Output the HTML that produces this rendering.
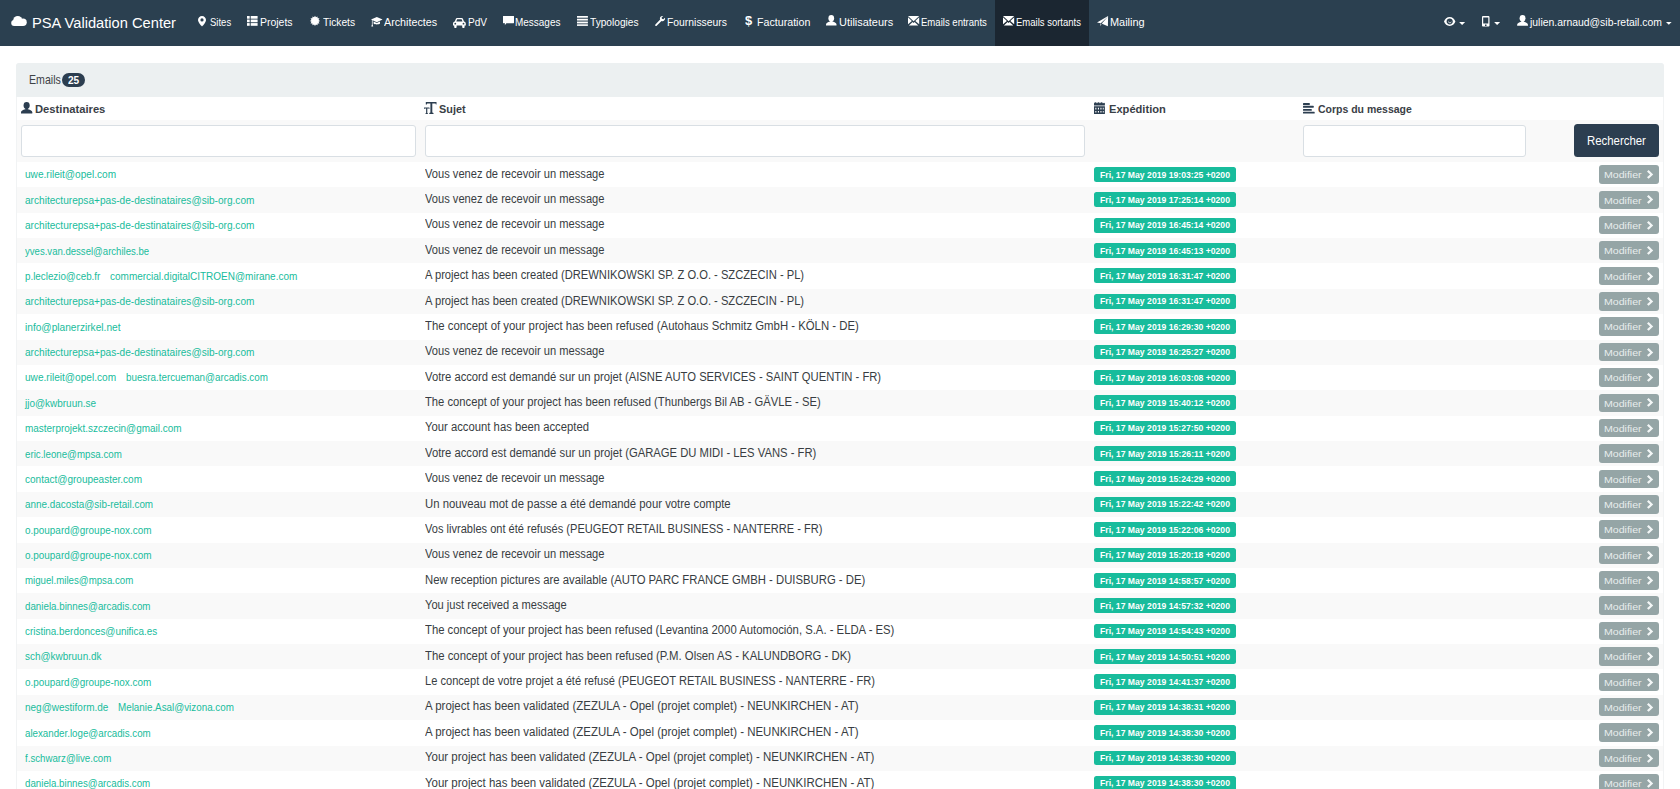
<!DOCTYPE html>
<html><head><meta charset="utf-8"><title>PSA Validation Center</title>
<style>
html,body{margin:0;padding:0;}
body{width:1680px;height:789px;overflow:hidden;position:relative;background:#fff;font-family:"Liberation Sans",sans-serif;}
.t{position:absolute;white-space:nowrap;line-height:1;transform-origin:0 0;}
.r{position:absolute;}
.i{position:absolute;overflow:visible;}
</style></head><body>
<div class="r" style="left:0.00px;top:0.00px;width:1680.00px;height:46.00px;background:#2b4050;"></div>
<div class="r" style="left:995.20px;top:0.00px;width:94.00px;height:46.00px;background:#1b2631;"></div>
<svg class="i" style="left:11.20px;top:16.10px;width:15.75px;height:10.00px" viewBox="0 0 15.75 10" fill="#ffffff"><circle cx="6.75" cy="4.6" r="4.6"/><circle cx="12" cy="6.2" r="3.75"/><circle cx="3.2" cy="7" r="3"/><rect x="3.2" y="6" width="8.8" height="4"/></svg>
<div class="t" style="left:31.50px;top:15px;font-size:15.2px;color:#ffffff;transform:scaleX(0.9654);">PSA Validation Center</div>
<div class="t" style="left:209.80px;top:17px;font-size:11.2px;color:#ffffff;transform:scaleX(0.8507);">Sites</div>
<div class="t" style="left:260.40px;top:17px;font-size:11.2px;color:#ffffff;transform:scaleX(0.9359);">Projets</div>
<div class="t" style="left:322.80px;top:17px;font-size:11.2px;color:#ffffff;transform:scaleX(0.9157);">Tickets</div>
<div class="t" style="left:384.30px;top:17px;font-size:11.2px;color:#ffffff;transform:scaleX(0.9588);">Architectes</div>
<div class="t" style="left:467.70px;top:17px;font-size:11.2px;color:#ffffff;transform:scaleX(0.9023);">PdV</div>
<div class="t" style="left:515.40px;top:17px;font-size:11.2px;color:#ffffff;transform:scaleX(0.8909);">Messages</div>
<div class="t" style="left:590.00px;top:17px;font-size:11.2px;color:#ffffff;transform:scaleX(0.9078);">Typologies</div>
<div class="t" style="left:667.00px;top:17px;font-size:11.2px;color:#ffffff;transform:scaleX(0.9268);">Fournisseurs</div>
<div class="t" style="left:756.50px;top:17px;font-size:11.2px;color:#ffffff;transform:scaleX(0.9526);">Facturation</div>
<div class="t" style="left:838.50px;top:17px;font-size:11.2px;color:#ffffff;transform:scaleX(0.9786);">Utilisateurs</div>
<div class="t" style="left:921.30px;top:17px;font-size:11.2px;color:#ffffff;transform:scaleX(0.8540);">Emails entrants</div>
<div class="t" style="left:1016.00px;top:17px;font-size:11.2px;color:#ffffff;transform:scaleX(0.8491);">Emails sortants</div>
<div class="t" style="left:1110.00px;top:17px;font-size:11.2px;color:#ffffff;transform:scaleX(0.9774);">Mailing</div>
<svg class="i" style="left:198.30px;top:15.75px;width:8.00px;height:10.50px" viewBox="0 0 8 10.5" fill="#ffffff"><path fill-rule="evenodd" d="M4 0C1.8 0 0 1.8 0 4C0 6.6 4 10.5 4 10.5C4 10.5 8 6.6 8 4C8 1.8 6.2 0 4 0ZM4 2.3A1.6 1.6 0 1 0 4 5.5A1.6 1.6 0 1 0 4 2.3Z"/></svg>
<svg class="i" style="left:247.30px;top:16.20px;width:10.60px;height:9.80px" viewBox="0 0 10.6 9.8" fill="#ffffff"><rect x="0" y="0" width="2.7" height="2.7"/><rect x="3.7" y="0" width="6.9" height="2.7"/><rect x="0" y="3.55" width="2.7" height="2.7"/><rect x="3.7" y="3.55" width="6.9" height="2.7"/><rect x="0" y="7.1" width="2.7" height="2.7"/><rect x="3.7" y="7.1" width="6.9" height="2.7"/></svg>
<svg class="i" style="left:309.60px;top:15.90px;width:10.00px;height:9.80px" viewBox="0 0 10 9.8" fill="#ffffff"><polygon points="10.10,4.90 8.57,5.86 9.42,7.45 7.62,7.52 7.55,9.32 5.96,8.47 5.00,10.00 4.04,8.47 2.45,9.32 2.38,7.52 0.58,7.45 1.43,5.86 -0.10,4.90 1.43,3.94 0.58,2.35 2.38,2.28 2.45,0.48 4.04,1.33 5.00,-0.20 5.96,1.33 7.55,0.48 7.62,2.28 9.42,2.35 8.57,3.94"/></svg>
<svg class="i" style="left:370.80px;top:16.60px;width:11.60px;height:9.60px" viewBox="0 0 11.6 9.6" fill="#ffffff"><path d="M5.8 0L11.6 2.6L5.8 5.2L0 2.6Z"/><path d="M2.6 4.4L5.8 5.9L9 4.4L9 6.6C8 7.8 3.6 7.8 2.6 6.6Z"/><path d="M0.9 2.8L1.6 2.8L1.6 7.6L2.2 9.6L0.3 9.6L0.9 7.6Z"/></svg>
<svg class="i" style="left:453.00px;top:17.50px;width:12.80px;height:10.00px" viewBox="0 0 12.8 10" fill="#ffffff"><path fill-rule="evenodd" d="M3 0.6C3.2 0.2 3.6 0 4 0H8.8C9.2 0 9.6 0.2 9.8 0.6L11 3.6C12 3.8 12.8 4.6 12.8 5.6V7.6H11.6V9.2C11.6 9.7 11.2 10 10.8 10H10C9.6 10 9.2 9.7 9.2 9.2V7.6H3.6V9.2C3.6 9.7 3.2 10 2.8 10H2C1.6 10 1.2 9.7 1.2 9.2V7.6H0V5.6C0 4.6 0.8 3.8 1.8 3.6ZM4.2 1.3L3.3 3.5H9.5L8.6 1.3ZM2.3 4.8A0.9 0.9 0 1 0 2.3 6.6A0.9 0.9 0 1 0 2.3 4.8ZM10.5 4.8A0.9 0.9 0 1 0 10.5 6.6A0.9 0.9 0 1 0 10.5 4.8Z"/></svg>
<svg class="i" style="left:502.80px;top:16.20px;width:11.00px;height:9.30px" viewBox="0 0 11 9.3" fill="#ffffff"><path d="M0.4 0H10.6C10.8 0 11 0.2 11 0.4V6.8C11 7 10.8 7.2 10.6 7.2H3.4L1.8 9.3L2 7.2H0.4C0.2 7.2 0 7 0 6.8V0.4C0 0.2 0.2 0 0.4 0Z"/></svg>
<svg class="i" style="left:576.60px;top:16.30px;width:10.90px;height:9.90px" viewBox="0 0 10.9 9.9" fill="#ffffff"><rect x="0" y="0" width="10.9" height="1.7"/><rect x="0" y="2.75" width="10.9" height="1.8"/><rect x="0" y="5.6" width="10.9" height="1.8"/><rect x="0" y="8.3" width="10.9" height="1.6"/></svg>
<svg class="i" style="left:654.60px;top:15.65px;width:10.40px;height:10.00px" viewBox="0 0 10.4 10" fill="#ffffff"><path d="M7.4 0C6 0 4.9 1.1 4.9 2.5C4.9 2.9 5 3.3 5.2 3.6L0.4 8.4C0 8.8 0 9.4 0.4 9.7C0.8 10.1 1.4 10.1 1.7 9.7L6.5 4.9C6.8 5.1 7.1 5.2 7.5 5.2C8.9 5.2 10.1 4 10.1 2.6C10.1 2.3 10 2 9.9 1.7L8.4 3.2L6.9 2.8L6.6 1.4L8.2 0.1C7.9 0 7.7 0 7.4 0Z"/></svg>
<div class="t" style="left:745.00px;top:15px;font-size:12.6px;color:#ffffff;font-weight:bold;transform:scaleX(1.0274);">$</div>
<svg class="i" style="left:825.80px;top:15.40px;width:10.50px;height:10.50px" viewBox="0 0 10.5 10.5" fill="#ffffff"><ellipse cx="5.25" cy="3.2" rx="2.85" ry="3.25"/><rect x="4.1" y="5" width="2.3" height="2.2"/><path d="M0 10.5V9.4C0 8 1.8 7.1 3.9 6.5H6.6C8.7 7.1 10.5 8 10.5 9.4V10.5Z"/></svg>
<svg class="i" style="left:908.00px;top:16.10px;width:11.20px;height:9.40px" viewBox="0 0 11.2 9.4" fill="#ffffff"><path d="M0 0H11.2L5.6 5.2Z"/><path d="M0 1.3L3.9 4.9L0 8.2Z"/><path d="M11.2 1.3L7.3 4.9L11.2 8.2Z"/><path d="M0.9 9.4L4.6 6L5.6 6.9L6.6 6L10.3 9.4Z"/></svg>
<svg class="i" style="left:1003.00px;top:16.10px;width:11.20px;height:9.40px" viewBox="0 0 11.2 9.4" fill="#ffffff"><path d="M0 0H11.2L5.6 5.2Z"/><path d="M0 1.3L3.9 4.9L0 8.2Z"/><path d="M11.2 1.3L7.3 4.9L11.2 8.2Z"/><path d="M0.9 9.4L4.6 6L5.6 6.9L6.6 6L10.3 9.4Z"/></svg>
<svg class="i" style="left:1096.90px;top:15.65px;width:11.10px;height:10.20px" viewBox="0 0 11.1 10.2" fill="#ffffff"><path d="M11.1 0L0 6.6L3.8 7.3L11.1 0.6L4.8 7.6L5.6 7.9L10.9 10.2Z"/><path d="M3.4 7.6L4.4 8.1L3.6 10.2Z"/></svg>
<svg class="i" style="left:1443.70px;top:16.60px;width:11.40px;height:8.90px" viewBox="0 0 11.4 8.9" fill="#ffffff"><path fill-rule="evenodd" d="M5.7 0C3 0 0.9 2 0 4.45C0.9 6.9 3 8.9 5.7 8.9C8.4 8.9 10.5 6.9 11.4 4.45C10.5 2 8.4 0 5.7 0ZM5.7 1.5C4 1.5 2.6 2.8 2.6 4.45C2.6 6.1 4 7.4 5.7 7.4C7.4 7.4 8.8 6.1 8.8 4.45C8.8 2.8 7.4 1.5 5.7 1.5Z"/><path d="M4 3.6C4 5.6 5 6.3 5.7 6.3C6.6 6.3 7.6 5.5 7.4 3.9C7 5 6.4 5.4 5.7 5.4C4.9 5.4 4.4 4.8 4 3.6Z"/></svg>
<svg class="i" style="left:1458.60px;top:21.90px;width:6.20px;height:3.00px" viewBox="0 0 6 3" fill="#ffffff"><path d="M0 0H6L3 3Z"/></svg>
<svg class="i" style="left:1482.00px;top:15.70px;width:7.50px;height:10.60px" viewBox="0 0 7.5 10.6" fill="#ffffff"><path fill-rule="evenodd" d="M1.2 0H6.3C7 0 7.5 0.5 7.5 1.2V9.4C7.5 10.1 7 10.6 6.3 10.6H1.2C0.5 10.6 0 10.1 0 9.4V1.2C0 0.5 0.5 0 1.2 0ZM1.2 1.4V7.6H6.3V1.4ZM3 8.4V10H4.5V8.4Z"/></svg>
<svg class="i" style="left:1494.20px;top:21.90px;width:6.20px;height:3.00px" viewBox="0 0 6 3" fill="#ffffff"><path d="M0 0H6L3 3Z"/></svg>
<svg class="i" style="left:1516.50px;top:15.40px;width:11.10px;height:10.80px" viewBox="0 0 10.5 10.5" fill="#ffffff"><ellipse cx="5.25" cy="3.2" rx="2.85" ry="3.25"/><rect x="4.1" y="5" width="2.3" height="2.2"/><path d="M0 10.5V9.4C0 8 1.8 7.1 3.9 6.5H6.6C8.7 7.1 10.5 8 10.5 9.4V10.5Z"/></svg>
<div class="t" style="left:1529.86px;top:17px;font-size:11.2px;color:#ffffff;transform:scaleX(0.9297);">julien.arnaud@sib-retail.com</div>
<svg class="i" style="left:1666.40px;top:21.90px;width:5.60px;height:2.90px" viewBox="0 0 6 3" fill="#ffffff"><path d="M0 0H6L3 3Z"/></svg>
<div class="r" style="left:15.80px;top:63.00px;width:1648.00px;height:726.00px;background:#ffffff;border:1px solid #f1f3f4;border-bottom:none;box-sizing:border-box;border-radius:4px 4px 0 0;"></div>
<div class="r" style="left:15.80px;top:63.00px;width:1648.00px;height:34.00px;background:#ecf0f1;border-radius:3px 3px 0 0;"></div>
<div class="t" style="left:29.20px;top:74px;font-size:12.4px;color:#3d4246;transform:scaleX(0.8548);">Emails</div>
<div class="r" style="left:62.20px;top:72.90px;width:22.50px;height:13.80px;background:#2c3e50;border-radius:6.9px;"></div>
<div class="t" style="left:67.90px;top:76px;font-size:10.0px;color:#ffffff;font-weight:bold;transform:scaleX(1.0090);">25</div>
<svg class="i" style="left:20.75px;top:102.00px;width:11.25px;height:11.60px" viewBox="0 0 10.5 10.5" fill="#2c3e50"><ellipse cx="5.25" cy="3.2" rx="2.85" ry="3.25"/><rect x="4.1" y="5" width="2.3" height="2.2"/><path d="M0 10.5V9.4C0 8 1.8 7.1 3.9 6.5H6.6C8.7 7.1 10.5 8 10.5 9.4V10.5Z"/></svg>
<div class="t" style="left:35.25px;top:104px;font-size:11.8px;color:#3a4046;font-weight:bold;transform:scaleX(0.9493);">Destinataires</div>
<svg class="i" style="left:424.30px;top:101.80px;width:12.50px;height:11.90px" viewBox="0 0 12.5 11.9" fill="#2c3e50"><path d="M1.8 0H12.5V2.5H11.9L11.5 1.4H8.3V10.6L9.5 11.1V11.9H5.3V11.1L6.4 10.6V1.4H3.2L2.8 2.5H1.8Z"/><path d="M0 5.6H5.4V6.9H5L4.8 6.4H3.3V11.1L4 11.5V11.9H1.4V11.5L2.1 11.1V6.4H0.6L0.4 6.9H0Z"/></svg>
<div class="t" style="left:438.80px;top:104px;font-size:11.8px;color:#3a4046;font-weight:bold;transform:scaleX(0.9220);">Sujet</div>
<svg class="i" style="left:1094.10px;top:101.80px;width:10.90px;height:11.90px" viewBox="0 0 10.9 11.9" fill="#2c3e50"><path d="M0 1.4C0.6 0 2.4 0 3 1.4C3.6 0 5.4 0 6 1.4C6.6 0 8.4 0 9 1.4C9.6 0.2 10.9 0.6 10.9 1.4V3.4H0Z"/><path fill-rule="evenodd" d="M0 4.3H10.9V11.9H0ZM1.3 5.8V7.4H2.4V5.8ZM3.9 5.8V7.4H5V5.8ZM6.4 5.8V7.4H7.5V5.8ZM8.8 5.8V7.4H9.7V5.8ZM1.3 8.9V10.4H2.4V8.9ZM3.9 8.9V10.4H5V8.9ZM6.4 8.9V10.4H7.5V8.9ZM8.8 8.9V10.4H9.7V8.9Z"/></svg>
<div class="t" style="left:1108.50px;top:104px;font-size:11.8px;color:#3a4046;font-weight:bold;transform:scaleX(0.9420);">Expédition</div>
<svg class="i" style="left:1303.20px;top:103.00px;width:11.70px;height:10.60px" viewBox="0 0 11.7 10.6" fill="#2c3e50"><rect x="0" y="0" width="6.8" height="1.9" rx="0.5"/><rect x="0" y="2.85" width="10.7" height="1.9" rx="0.5"/><rect x="0" y="5.9" width="8.8" height="1.9" rx="0.5"/><rect x="0" y="8.7" width="11.7" height="1.9" rx="0.5"/></svg>
<div class="t" style="left:1317.80px;top:104px;font-size:11.8px;color:#3a4046;font-weight:bold;transform:scaleX(0.8887);">Corps du message</div>
<div class="r" style="left:16.80px;top:120.00px;width:1646.00px;height:42.00px;background:#f9f9f9;"></div>
<div class="r" style="left:20.50px;top:124.50px;width:395.10px;height:32.20px;background:#fff;background:#fff;border:1.5px solid #d9dfe4;border-radius:3px;box-sizing:border-box;"></div>
<div class="r" style="left:425.00px;top:124.50px;width:660.40px;height:32.20px;background:#fff;background:#fff;border:1.5px solid #d9dfe4;border-radius:3px;box-sizing:border-box;"></div>
<div class="r" style="left:1303.30px;top:124.50px;width:223.20px;height:32.20px;background:#fff;background:#fff;border:1.5px solid #d9dfe4;border-radius:3px;box-sizing:border-box;"></div>
<div class="r" style="left:1574.10px;top:124.00px;width:84.90px;height:33.20px;background:#2c3e50;border-radius:3.5px;"></div>
<div class="t" style="left:1587.40px;top:135px;font-size:12.0px;color:#ffffff;transform:scaleX(0.9494);">Rechercher</div>
<div class="t" style="left:25.00px;top:169px;font-size:11.0px;color:#18bc9c;transform:scaleX(0.9182);">uwe.rileit@opel.com</div>
<div class="t" style="left:425.40px;top:168px;font-size:12.0px;color:#383d42;transform:scaleX(0.9279);">Vous venez de recevoir un message</div>
<div class="r" style="left:1094.00px;top:167.00px;width:141.60px;height:14.80px;background:#18bc9c;border-radius:2.5px;"></div>
<div class="t" style="left:1099.80px;top:171px;font-size:9.0px;color:#ffffff;font-weight:bold;transform:scaleX(0.9604);">Fri, 17 May 2019 19:03:25 +0200</div>
<div class="r" style="left:1599.00px;top:165.20px;width:59.80px;height:18.50px;background:#95a5a6;border-radius:3px;"></div>
<div class="t" style="left:1604.20px;top:170px;font-size:9.9px;color:#e8eded;transform:scaleX(1.0712);">Modifier</div>
<svg class="i" style="left:1646.90px;top:170.10px;width:6.20px;height:8.80px" viewBox="0 0 6.2 8.8" fill="#f4f7f7"><path d="M0 1.5L1.6 0L6.2 4.4L1.6 8.8L0 7.3L3.1 4.4Z"/></svg>
<div class="r" style="left:16.80px;top:187.37px;width:1646.00px;height:25.37px;background:#f9f9f9;"></div>
<div class="t" style="left:25.00px;top:195px;font-size:11.0px;color:#18bc9c;transform:scaleX(0.9179);">architecturepsa+pas-de-destinataires@sib-org.com</div>
<div class="t" style="left:425.40px;top:193px;font-size:12.0px;color:#383d42;transform:scaleX(0.9279);">Vous venez de recevoir un message</div>
<div class="r" style="left:1094.00px;top:192.37px;width:141.60px;height:14.80px;background:#18bc9c;border-radius:2.5px;"></div>
<div class="t" style="left:1099.80px;top:196px;font-size:9.0px;color:#ffffff;font-weight:bold;transform:scaleX(0.9604);">Fri, 17 May 2019 17:25:14 +0200</div>
<div class="r" style="left:1599.00px;top:190.57px;width:59.80px;height:18.50px;background:#95a5a6;border-radius:3px;"></div>
<div class="t" style="left:1604.20px;top:196px;font-size:9.9px;color:#e8eded;transform:scaleX(1.0712);">Modifier</div>
<svg class="i" style="left:1646.90px;top:195.47px;width:6.20px;height:8.80px" viewBox="0 0 6.2 8.8" fill="#f4f7f7"><path d="M0 1.5L1.6 0L6.2 4.4L1.6 8.8L0 7.3L3.1 4.4Z"/></svg>
<div class="t" style="left:25.00px;top:220px;font-size:11.0px;color:#18bc9c;transform:scaleX(0.9179);">architecturepsa+pas-de-destinataires@sib-org.com</div>
<div class="t" style="left:425.40px;top:218px;font-size:12.0px;color:#383d42;transform:scaleX(0.9279);">Vous venez de recevoir un message</div>
<div class="r" style="left:1094.00px;top:217.74px;width:141.60px;height:14.80px;background:#18bc9c;border-radius:2.5px;"></div>
<div class="t" style="left:1099.80px;top:221px;font-size:9.0px;color:#ffffff;font-weight:bold;transform:scaleX(0.9604);">Fri, 17 May 2019 16:45:14 +0200</div>
<div class="r" style="left:1599.00px;top:215.94px;width:59.80px;height:18.50px;background:#95a5a6;border-radius:3px;"></div>
<div class="t" style="left:1604.20px;top:221px;font-size:9.9px;color:#e8eded;transform:scaleX(1.0712);">Modifier</div>
<svg class="i" style="left:1646.90px;top:220.84px;width:6.20px;height:8.80px" viewBox="0 0 6.2 8.8" fill="#f4f7f7"><path d="M0 1.5L1.6 0L6.2 4.4L1.6 8.8L0 7.3L3.1 4.4Z"/></svg>
<div class="r" style="left:16.80px;top:238.11px;width:1646.00px;height:25.37px;background:#f9f9f9;"></div>
<div class="t" style="left:25.00px;top:246px;font-size:11.0px;color:#18bc9c;transform:scaleX(0.8702);">yves.van.dessel@archiles.be</div>
<div class="t" style="left:425.40px;top:244px;font-size:12.0px;color:#383d42;transform:scaleX(0.9279);">Vous venez de recevoir un message</div>
<div class="r" style="left:1094.00px;top:243.11px;width:141.60px;height:14.80px;background:#18bc9c;border-radius:2.5px;"></div>
<div class="t" style="left:1099.80px;top:247px;font-size:9.0px;color:#ffffff;font-weight:bold;transform:scaleX(0.9604);">Fri, 17 May 2019 16:45:13 +0200</div>
<div class="r" style="left:1599.00px;top:241.31px;width:59.80px;height:18.50px;background:#95a5a6;border-radius:3px;"></div>
<div class="t" style="left:1604.20px;top:246px;font-size:9.9px;color:#e8eded;transform:scaleX(1.0712);">Modifier</div>
<svg class="i" style="left:1646.90px;top:246.21px;width:6.20px;height:8.80px" viewBox="0 0 6.2 8.8" fill="#f4f7f7"><path d="M0 1.5L1.6 0L6.2 4.4L1.6 8.8L0 7.3L3.1 4.4Z"/></svg>
<div class="t" style="left:25.00px;top:271px;font-size:11.0px;color:#18bc9c;transform:scaleX(0.8908);">p.leclezio@ceb.fr</div>
<div class="t" style="left:110.00px;top:271px;font-size:11.0px;color:#18bc9c;transform:scaleX(0.9086);">commercial.digitalCITROEN@mirane.com</div>
<div class="t" style="left:425.40px;top:269px;font-size:12.0px;color:#383d42;transform:scaleX(0.9309);">A project has been created (DREWNIKOWSKI SP. Z O.O. - SZCZECIN - PL)</div>
<div class="r" style="left:1094.00px;top:268.48px;width:141.60px;height:14.80px;background:#18bc9c;border-radius:2.5px;"></div>
<div class="t" style="left:1099.80px;top:272px;font-size:9.0px;color:#ffffff;font-weight:bold;transform:scaleX(0.9604);">Fri, 17 May 2019 16:31:47 +0200</div>
<div class="r" style="left:1599.00px;top:266.68px;width:59.80px;height:18.50px;background:#95a5a6;border-radius:3px;"></div>
<div class="t" style="left:1604.20px;top:272px;font-size:9.9px;color:#e8eded;transform:scaleX(1.0712);">Modifier</div>
<svg class="i" style="left:1646.90px;top:271.58px;width:6.20px;height:8.80px" viewBox="0 0 6.2 8.8" fill="#f4f7f7"><path d="M0 1.5L1.6 0L6.2 4.4L1.6 8.8L0 7.3L3.1 4.4Z"/></svg>
<div class="r" style="left:16.80px;top:288.85px;width:1646.00px;height:25.37px;background:#f9f9f9;"></div>
<div class="t" style="left:25.00px;top:296px;font-size:11.0px;color:#18bc9c;transform:scaleX(0.9179);">architecturepsa+pas-de-destinataires@sib-org.com</div>
<div class="t" style="left:425.40px;top:295px;font-size:12.0px;color:#383d42;transform:scaleX(0.9309);">A project has been created (DREWNIKOWSKI SP. Z O.O. - SZCZECIN - PL)</div>
<div class="r" style="left:1094.00px;top:293.85px;width:141.60px;height:14.80px;background:#18bc9c;border-radius:2.5px;"></div>
<div class="t" style="left:1099.80px;top:297px;font-size:9.0px;color:#ffffff;font-weight:bold;transform:scaleX(0.9604);">Fri, 17 May 2019 16:31:47 +0200</div>
<div class="r" style="left:1599.00px;top:292.05px;width:59.80px;height:18.50px;background:#95a5a6;border-radius:3px;"></div>
<div class="t" style="left:1604.20px;top:297px;font-size:9.9px;color:#e8eded;transform:scaleX(1.0712);">Modifier</div>
<svg class="i" style="left:1646.90px;top:296.95px;width:6.20px;height:8.80px" viewBox="0 0 6.2 8.8" fill="#f4f7f7"><path d="M0 1.5L1.6 0L6.2 4.4L1.6 8.8L0 7.3L3.1 4.4Z"/></svg>
<div class="t" style="left:25.00px;top:322px;font-size:11.0px;color:#18bc9c;transform:scaleX(0.9226);">info@planerzirkel.net</div>
<div class="t" style="left:425.40px;top:320px;font-size:12.0px;color:#383d42;transform:scaleX(0.9467);">The concept of your project has been refused (Autohaus Schmitz GmbH - KÖLN - DE)</div>
<div class="r" style="left:1094.00px;top:319.22px;width:141.60px;height:14.80px;background:#18bc9c;border-radius:2.5px;"></div>
<div class="t" style="left:1099.80px;top:323px;font-size:9.0px;color:#ffffff;font-weight:bold;transform:scaleX(0.9604);">Fri, 17 May 2019 16:29:30 +0200</div>
<div class="r" style="left:1599.00px;top:317.42px;width:59.80px;height:18.50px;background:#95a5a6;border-radius:3px;"></div>
<div class="t" style="left:1604.20px;top:322px;font-size:9.9px;color:#e8eded;transform:scaleX(1.0712);">Modifier</div>
<svg class="i" style="left:1646.90px;top:322.32px;width:6.20px;height:8.80px" viewBox="0 0 6.2 8.8" fill="#f4f7f7"><path d="M0 1.5L1.6 0L6.2 4.4L1.6 8.8L0 7.3L3.1 4.4Z"/></svg>
<div class="r" style="left:16.80px;top:339.59px;width:1646.00px;height:25.37px;background:#f9f9f9;"></div>
<div class="t" style="left:25.00px;top:347px;font-size:11.0px;color:#18bc9c;transform:scaleX(0.9179);">architecturepsa+pas-de-destinataires@sib-org.com</div>
<div class="t" style="left:425.40px;top:345px;font-size:12.0px;color:#383d42;transform:scaleX(0.9279);">Vous venez de recevoir un message</div>
<div class="r" style="left:1094.00px;top:344.59px;width:141.60px;height:14.80px;background:#18bc9c;border-radius:2.5px;"></div>
<div class="t" style="left:1099.80px;top:348px;font-size:9.0px;color:#ffffff;font-weight:bold;transform:scaleX(0.9604);">Fri, 17 May 2019 16:25:27 +0200</div>
<div class="r" style="left:1599.00px;top:342.79px;width:59.80px;height:18.50px;background:#95a5a6;border-radius:3px;"></div>
<div class="t" style="left:1604.20px;top:348px;font-size:9.9px;color:#e8eded;transform:scaleX(1.0712);">Modifier</div>
<svg class="i" style="left:1646.90px;top:347.69px;width:6.20px;height:8.80px" viewBox="0 0 6.2 8.8" fill="#f4f7f7"><path d="M0 1.5L1.6 0L6.2 4.4L1.6 8.8L0 7.3L3.1 4.4Z"/></svg>
<div class="t" style="left:25.00px;top:372px;font-size:11.0px;color:#18bc9c;transform:scaleX(0.9182);">uwe.rileit@opel.com</div>
<div class="t" style="left:125.60px;top:372px;font-size:11.0px;color:#18bc9c;transform:scaleX(0.8918);">buesra.tercueman@arcadis.com</div>
<div class="t" style="left:425.40px;top:371px;font-size:12.0px;color:#383d42;transform:scaleX(0.9369);">Votre accord est demandé sur un projet (AISNE AUTO SERVICES - SAINT QUENTIN - FR)</div>
<div class="r" style="left:1094.00px;top:369.96px;width:141.60px;height:14.80px;background:#18bc9c;border-radius:2.5px;"></div>
<div class="t" style="left:1099.80px;top:374px;font-size:9.0px;color:#ffffff;font-weight:bold;transform:scaleX(0.9604);">Fri, 17 May 2019 16:03:08 +0200</div>
<div class="r" style="left:1599.00px;top:368.16px;width:59.80px;height:18.50px;background:#95a5a6;border-radius:3px;"></div>
<div class="t" style="left:1604.20px;top:373px;font-size:9.9px;color:#e8eded;transform:scaleX(1.0712);">Modifier</div>
<svg class="i" style="left:1646.90px;top:373.06px;width:6.20px;height:8.80px" viewBox="0 0 6.2 8.8" fill="#f4f7f7"><path d="M0 1.5L1.6 0L6.2 4.4L1.6 8.8L0 7.3L3.1 4.4Z"/></svg>
<div class="r" style="left:16.80px;top:390.33px;width:1646.00px;height:25.37px;background:#f9f9f9;"></div>
<div class="t" style="left:25.25px;top:398px;font-size:11.0px;color:#18bc9c;transform:scaleX(0.9059);">jjo@kwbruun.se</div>
<div class="t" style="left:425.40px;top:396px;font-size:12.0px;color:#383d42;transform:scaleX(0.9357);">The concept of your project has been refused (Thunbergs Bil AB - GÄVLE - SE)</div>
<div class="r" style="left:1094.00px;top:395.33px;width:141.60px;height:14.80px;background:#18bc9c;border-radius:2.5px;"></div>
<div class="t" style="left:1099.80px;top:399px;font-size:9.0px;color:#ffffff;font-weight:bold;transform:scaleX(0.9604);">Fri, 17 May 2019 15:40:12 +0200</div>
<div class="r" style="left:1599.00px;top:393.53px;width:59.80px;height:18.50px;background:#95a5a6;border-radius:3px;"></div>
<div class="t" style="left:1604.20px;top:399px;font-size:9.9px;color:#e8eded;transform:scaleX(1.0712);">Modifier</div>
<svg class="i" style="left:1646.90px;top:398.43px;width:6.20px;height:8.80px" viewBox="0 0 6.2 8.8" fill="#f4f7f7"><path d="M0 1.5L1.6 0L6.2 4.4L1.6 8.8L0 7.3L3.1 4.4Z"/></svg>
<div class="t" style="left:25.00px;top:423px;font-size:11.0px;color:#18bc9c;transform:scaleX(0.9039);">masterprojekt.szczecin@gmail.com</div>
<div class="t" style="left:425.40px;top:421px;font-size:12.0px;color:#383d42;transform:scaleX(0.9406);">Your account has been accepted</div>
<div class="r" style="left:1094.00px;top:420.70px;width:141.60px;height:14.80px;background:#18bc9c;border-radius:2.5px;"></div>
<div class="t" style="left:1099.80px;top:424px;font-size:9.0px;color:#ffffff;font-weight:bold;transform:scaleX(0.9604);">Fri, 17 May 2019 15:27:50 +0200</div>
<div class="r" style="left:1599.00px;top:418.90px;width:59.80px;height:18.50px;background:#95a5a6;border-radius:3px;"></div>
<div class="t" style="left:1604.20px;top:424px;font-size:9.9px;color:#e8eded;transform:scaleX(1.0712);">Modifier</div>
<svg class="i" style="left:1646.90px;top:423.80px;width:6.20px;height:8.80px" viewBox="0 0 6.2 8.8" fill="#f4f7f7"><path d="M0 1.5L1.6 0L6.2 4.4L1.6 8.8L0 7.3L3.1 4.4Z"/></svg>
<div class="r" style="left:16.80px;top:441.07px;width:1646.00px;height:25.37px;background:#f9f9f9;"></div>
<div class="t" style="left:25.00px;top:449px;font-size:11.0px;color:#18bc9c;transform:scaleX(0.8831);">eric.leone@mpsa.com</div>
<div class="t" style="left:425.40px;top:447px;font-size:12.0px;color:#383d42;transform:scaleX(0.9378);">Votre accord est demandé sur un projet (GARAGE DU MIDI - LES VANS - FR)</div>
<div class="r" style="left:1094.00px;top:446.07px;width:141.60px;height:14.80px;background:#18bc9c;border-radius:2.5px;"></div>
<div class="t" style="left:1099.80px;top:450px;font-size:9.0px;color:#ffffff;font-weight:bold;transform:scaleX(0.9639);">Fri, 17 May 2019 15:26:11 +0200</div>
<div class="r" style="left:1599.00px;top:444.27px;width:59.80px;height:18.50px;background:#95a5a6;border-radius:3px;"></div>
<div class="t" style="left:1604.20px;top:449px;font-size:9.9px;color:#e8eded;transform:scaleX(1.0712);">Modifier</div>
<svg class="i" style="left:1646.90px;top:449.17px;width:6.20px;height:8.80px" viewBox="0 0 6.2 8.8" fill="#f4f7f7"><path d="M0 1.5L1.6 0L6.2 4.4L1.6 8.8L0 7.3L3.1 4.4Z"/></svg>
<div class="t" style="left:25.00px;top:474px;font-size:11.0px;color:#18bc9c;transform:scaleX(0.9099);">contact@groupeaster.com</div>
<div class="t" style="left:425.40px;top:472px;font-size:12.0px;color:#383d42;transform:scaleX(0.9279);">Vous venez de recevoir un message</div>
<div class="r" style="left:1094.00px;top:471.44px;width:141.60px;height:14.80px;background:#18bc9c;border-radius:2.5px;"></div>
<div class="t" style="left:1099.80px;top:475px;font-size:9.0px;color:#ffffff;font-weight:bold;transform:scaleX(0.9604);">Fri, 17 May 2019 15:24:29 +0200</div>
<div class="r" style="left:1599.00px;top:469.64px;width:59.80px;height:18.50px;background:#95a5a6;border-radius:3px;"></div>
<div class="t" style="left:1604.20px;top:475px;font-size:9.9px;color:#e8eded;transform:scaleX(1.0712);">Modifier</div>
<svg class="i" style="left:1646.90px;top:474.54px;width:6.20px;height:8.80px" viewBox="0 0 6.2 8.8" fill="#f4f7f7"><path d="M0 1.5L1.6 0L6.2 4.4L1.6 8.8L0 7.3L3.1 4.4Z"/></svg>
<div class="r" style="left:16.80px;top:491.81px;width:1646.00px;height:25.37px;background:#f9f9f9;"></div>
<div class="t" style="left:25.00px;top:499px;font-size:11.0px;color:#18bc9c;transform:scaleX(0.8982);">anne.dacosta@sib-retail.com</div>
<div class="t" style="left:425.40px;top:498px;font-size:12.0px;color:#383d42;transform:scaleX(0.9448);">Un nouveau mot de passe a été demandé pour votre compte</div>
<div class="r" style="left:1094.00px;top:496.81px;width:141.60px;height:14.80px;background:#18bc9c;border-radius:2.5px;"></div>
<div class="t" style="left:1099.80px;top:500px;font-size:9.0px;color:#ffffff;font-weight:bold;transform:scaleX(0.9604);">Fri, 17 May 2019 15:22:42 +0200</div>
<div class="r" style="left:1599.00px;top:495.01px;width:59.80px;height:18.50px;background:#95a5a6;border-radius:3px;"></div>
<div class="t" style="left:1604.20px;top:500px;font-size:9.9px;color:#e8eded;transform:scaleX(1.0712);">Modifier</div>
<svg class="i" style="left:1646.90px;top:499.91px;width:6.20px;height:8.80px" viewBox="0 0 6.2 8.8" fill="#f4f7f7"><path d="M0 1.5L1.6 0L6.2 4.4L1.6 8.8L0 7.3L3.1 4.4Z"/></svg>
<div class="t" style="left:25.00px;top:525px;font-size:11.0px;color:#18bc9c;transform:scaleX(0.9023);">o.poupard@groupe-nox.com</div>
<div class="t" style="left:425.40px;top:523px;font-size:12.0px;color:#383d42;transform:scaleX(0.9215);">Vos livrables ont été refusés (PEUGEOT RETAIL BUSINESS - NANTERRE - FR)</div>
<div class="r" style="left:1094.00px;top:522.18px;width:141.60px;height:14.80px;background:#18bc9c;border-radius:2.5px;"></div>
<div class="t" style="left:1099.80px;top:526px;font-size:9.0px;color:#ffffff;font-weight:bold;transform:scaleX(0.9604);">Fri, 17 May 2019 15:22:06 +0200</div>
<div class="r" style="left:1599.00px;top:520.38px;width:59.80px;height:18.50px;background:#95a5a6;border-radius:3px;"></div>
<div class="t" style="left:1604.20px;top:525px;font-size:9.9px;color:#e8eded;transform:scaleX(1.0712);">Modifier</div>
<svg class="i" style="left:1646.90px;top:525.28px;width:6.20px;height:8.80px" viewBox="0 0 6.2 8.8" fill="#f4f7f7"><path d="M0 1.5L1.6 0L6.2 4.4L1.6 8.8L0 7.3L3.1 4.4Z"/></svg>
<div class="r" style="left:16.80px;top:542.55px;width:1646.00px;height:25.37px;background:#f9f9f9;"></div>
<div class="t" style="left:25.00px;top:550px;font-size:11.0px;color:#18bc9c;transform:scaleX(0.9023);">o.poupard@groupe-nox.com</div>
<div class="t" style="left:425.40px;top:548px;font-size:12.0px;color:#383d42;transform:scaleX(0.9279);">Vous venez de recevoir un message</div>
<div class="r" style="left:1094.00px;top:547.55px;width:141.60px;height:14.80px;background:#18bc9c;border-radius:2.5px;"></div>
<div class="t" style="left:1099.80px;top:551px;font-size:9.0px;color:#ffffff;font-weight:bold;transform:scaleX(0.9604);">Fri, 17 May 2019 15:20:18 +0200</div>
<div class="r" style="left:1599.00px;top:545.75px;width:59.80px;height:18.50px;background:#95a5a6;border-radius:3px;"></div>
<div class="t" style="left:1604.20px;top:551px;font-size:9.9px;color:#e8eded;transform:scaleX(1.0712);">Modifier</div>
<svg class="i" style="left:1646.90px;top:550.65px;width:6.20px;height:8.80px" viewBox="0 0 6.2 8.8" fill="#f4f7f7"><path d="M0 1.5L1.6 0L6.2 4.4L1.6 8.8L0 7.3L3.1 4.4Z"/></svg>
<div class="t" style="left:25.00px;top:575px;font-size:11.0px;color:#18bc9c;transform:scaleX(0.8802);">miguel.miles@mpsa.com</div>
<div class="t" style="left:425.40px;top:574px;font-size:12.0px;color:#383d42;transform:scaleX(0.9427);">New reception pictures are available (AUTO PARC FRANCE GMBH - DUISBURG - DE)</div>
<div class="r" style="left:1094.00px;top:572.92px;width:141.60px;height:14.80px;background:#18bc9c;border-radius:2.5px;"></div>
<div class="t" style="left:1099.80px;top:577px;font-size:9.0px;color:#ffffff;font-weight:bold;transform:scaleX(0.9604);">Fri, 17 May 2019 14:58:57 +0200</div>
<div class="r" style="left:1599.00px;top:571.12px;width:59.80px;height:18.50px;background:#95a5a6;border-radius:3px;"></div>
<div class="t" style="left:1604.20px;top:576px;font-size:9.9px;color:#e8eded;transform:scaleX(1.0712);">Modifier</div>
<svg class="i" style="left:1646.90px;top:576.02px;width:6.20px;height:8.80px" viewBox="0 0 6.2 8.8" fill="#f4f7f7"><path d="M0 1.5L1.6 0L6.2 4.4L1.6 8.8L0 7.3L3.1 4.4Z"/></svg>
<div class="r" style="left:16.80px;top:593.29px;width:1646.00px;height:25.37px;background:#f9f9f9;"></div>
<div class="t" style="left:25.00px;top:601px;font-size:11.0px;color:#18bc9c;transform:scaleX(0.8875);">daniela.binnes@arcadis.com</div>
<div class="t" style="left:425.40px;top:599px;font-size:12.0px;color:#383d42;transform:scaleX(0.9261);">You just received a message</div>
<div class="r" style="left:1094.00px;top:598.29px;width:141.60px;height:14.80px;background:#18bc9c;border-radius:2.5px;"></div>
<div class="t" style="left:1099.80px;top:602px;font-size:9.0px;color:#ffffff;font-weight:bold;transform:scaleX(0.9604);">Fri, 17 May 2019 14:57:32 +0200</div>
<div class="r" style="left:1599.00px;top:596.49px;width:59.80px;height:18.50px;background:#95a5a6;border-radius:3px;"></div>
<div class="t" style="left:1604.20px;top:602px;font-size:9.9px;color:#e8eded;transform:scaleX(1.0712);">Modifier</div>
<svg class="i" style="left:1646.90px;top:601.39px;width:6.20px;height:8.80px" viewBox="0 0 6.2 8.8" fill="#f4f7f7"><path d="M0 1.5L1.6 0L6.2 4.4L1.6 8.8L0 7.3L3.1 4.4Z"/></svg>
<div class="t" style="left:25.00px;top:626px;font-size:11.0px;color:#18bc9c;transform:scaleX(0.8999);">cristina.berdonces@unifica.es</div>
<div class="t" style="left:425.40px;top:624px;font-size:12.0px;color:#383d42;transform:scaleX(0.9420);">The concept of your project has been refused (Levantina 2000 Automoción, S.A. - ELDA - ES)</div>
<div class="r" style="left:1094.00px;top:623.66px;width:141.60px;height:14.80px;background:#18bc9c;border-radius:2.5px;"></div>
<div class="t" style="left:1099.80px;top:627px;font-size:9.0px;color:#ffffff;font-weight:bold;transform:scaleX(0.9604);">Fri, 17 May 2019 14:54:43 +0200</div>
<div class="r" style="left:1599.00px;top:621.86px;width:59.80px;height:18.50px;background:#95a5a6;border-radius:3px;"></div>
<div class="t" style="left:1604.20px;top:627px;font-size:9.9px;color:#e8eded;transform:scaleX(1.0712);">Modifier</div>
<svg class="i" style="left:1646.90px;top:626.76px;width:6.20px;height:8.80px" viewBox="0 0 6.2 8.8" fill="#f4f7f7"><path d="M0 1.5L1.6 0L6.2 4.4L1.6 8.8L0 7.3L3.1 4.4Z"/></svg>
<div class="r" style="left:16.80px;top:644.03px;width:1646.00px;height:25.37px;background:#f9f9f9;"></div>
<div class="t" style="left:25.00px;top:651px;font-size:11.0px;color:#18bc9c;transform:scaleX(0.9044);">sch@kwbruun.dk</div>
<div class="t" style="left:425.40px;top:650px;font-size:12.0px;color:#383d42;transform:scaleX(0.9439);">The concept of your project has been refused (P.M. Olsen AS - KALUNDBORG - DK)</div>
<div class="r" style="left:1094.00px;top:649.03px;width:141.60px;height:14.80px;background:#18bc9c;border-radius:2.5px;"></div>
<div class="t" style="left:1099.80px;top:653px;font-size:9.0px;color:#ffffff;font-weight:bold;transform:scaleX(0.9604);">Fri, 17 May 2019 14:50:51 +0200</div>
<div class="r" style="left:1599.00px;top:647.23px;width:59.80px;height:18.50px;background:#95a5a6;border-radius:3px;"></div>
<div class="t" style="left:1604.20px;top:652px;font-size:9.9px;color:#e8eded;transform:scaleX(1.0712);">Modifier</div>
<svg class="i" style="left:1646.90px;top:652.13px;width:6.20px;height:8.80px" viewBox="0 0 6.2 8.8" fill="#f4f7f7"><path d="M0 1.5L1.6 0L6.2 4.4L1.6 8.8L0 7.3L3.1 4.4Z"/></svg>
<div class="t" style="left:25.00px;top:677px;font-size:11.0px;color:#18bc9c;transform:scaleX(0.9009);">o.poupard@groupe-nox.com</div>
<div class="t" style="left:425.40px;top:675px;font-size:12.0px;color:#383d42;transform:scaleX(0.9246);">Le concept de votre projet a été refusé (PEUGEOT RETAIL BUSINESS - NANTERRE - FR)</div>
<div class="r" style="left:1094.00px;top:674.40px;width:141.60px;height:14.80px;background:#18bc9c;border-radius:2.5px;"></div>
<div class="t" style="left:1099.80px;top:678px;font-size:9.0px;color:#ffffff;font-weight:bold;transform:scaleX(0.9604);">Fri, 17 May 2019 14:41:37 +0200</div>
<div class="r" style="left:1599.00px;top:672.60px;width:59.80px;height:18.50px;background:#95a5a6;border-radius:3px;"></div>
<div class="t" style="left:1604.20px;top:678px;font-size:9.9px;color:#e8eded;transform:scaleX(1.0712);">Modifier</div>
<svg class="i" style="left:1646.90px;top:677.50px;width:6.20px;height:8.80px" viewBox="0 0 6.2 8.8" fill="#f4f7f7"><path d="M0 1.5L1.6 0L6.2 4.4L1.6 8.8L0 7.3L3.1 4.4Z"/></svg>
<div class="r" style="left:16.80px;top:694.77px;width:1646.00px;height:25.37px;background:#f9f9f9;"></div>
<div class="t" style="left:25.00px;top:702px;font-size:11.0px;color:#18bc9c;transform:scaleX(0.9080);">neg@westiform.de</div>
<div class="t" style="left:118.20px;top:702px;font-size:11.0px;color:#18bc9c;transform:scaleX(0.8929);">Melanie.Asal@vizona.com</div>
<div class="t" style="left:425.40px;top:700px;font-size:12.0px;color:#383d42;transform:scaleX(0.9565);">A project has been validated (ZEZULA - Opel (projet complet) - NEUNKIRCHEN - AT)</div>
<div class="r" style="left:1094.00px;top:699.77px;width:141.60px;height:14.80px;background:#18bc9c;border-radius:2.5px;"></div>
<div class="t" style="left:1099.80px;top:703px;font-size:9.0px;color:#ffffff;font-weight:bold;transform:scaleX(0.9604);">Fri, 17 May 2019 14:38:31 +0200</div>
<div class="r" style="left:1599.00px;top:697.97px;width:59.80px;height:18.50px;background:#95a5a6;border-radius:3px;"></div>
<div class="t" style="left:1604.20px;top:703px;font-size:9.9px;color:#e8eded;transform:scaleX(1.0712);">Modifier</div>
<svg class="i" style="left:1646.90px;top:702.87px;width:6.20px;height:8.80px" viewBox="0 0 6.2 8.8" fill="#f4f7f7"><path d="M0 1.5L1.6 0L6.2 4.4L1.6 8.8L0 7.3L3.1 4.4Z"/></svg>
<div class="t" style="left:25.00px;top:728px;font-size:11.0px;color:#18bc9c;transform:scaleX(0.8851);">alexander.loge@arcadis.com</div>
<div class="t" style="left:425.40px;top:726px;font-size:12.0px;color:#383d42;transform:scaleX(0.9565);">A project has been validated (ZEZULA - Opel (projet complet) - NEUNKIRCHEN - AT)</div>
<div class="r" style="left:1094.00px;top:725.14px;width:141.60px;height:14.80px;background:#18bc9c;border-radius:2.5px;"></div>
<div class="t" style="left:1099.80px;top:729px;font-size:9.0px;color:#ffffff;font-weight:bold;transform:scaleX(0.9604);">Fri, 17 May 2019 14:38:30 +0200</div>
<div class="r" style="left:1599.00px;top:723.34px;width:59.80px;height:18.50px;background:#95a5a6;border-radius:3px;"></div>
<div class="t" style="left:1604.20px;top:728px;font-size:9.9px;color:#e8eded;transform:scaleX(1.0712);">Modifier</div>
<svg class="i" style="left:1646.90px;top:728.24px;width:6.20px;height:8.80px" viewBox="0 0 6.2 8.8" fill="#f4f7f7"><path d="M0 1.5L1.6 0L6.2 4.4L1.6 8.8L0 7.3L3.1 4.4Z"/></svg>
<div class="r" style="left:16.80px;top:745.51px;width:1646.00px;height:25.37px;background:#f9f9f9;"></div>
<div class="t" style="left:25.00px;top:753px;font-size:11.0px;color:#18bc9c;transform:scaleX(0.8800);">f.schwarz@live.com</div>
<div class="t" style="left:425.40px;top:751px;font-size:12.0px;color:#383d42;transform:scaleX(0.9558);">Your project has been validated (ZEZULA - Opel (projet complet) - NEUNKIRCHEN - AT)</div>
<div class="r" style="left:1094.00px;top:750.51px;width:141.60px;height:14.80px;background:#18bc9c;border-radius:2.5px;"></div>
<div class="t" style="left:1099.80px;top:754px;font-size:9.0px;color:#ffffff;font-weight:bold;transform:scaleX(0.9604);">Fri, 17 May 2019 14:38:30 +0200</div>
<div class="r" style="left:1599.00px;top:748.71px;width:59.80px;height:18.50px;background:#95a5a6;border-radius:3px;"></div>
<div class="t" style="left:1604.20px;top:754px;font-size:9.9px;color:#e8eded;transform:scaleX(1.0712);">Modifier</div>
<svg class="i" style="left:1646.90px;top:753.61px;width:6.20px;height:8.80px" viewBox="0 0 6.2 8.8" fill="#f4f7f7"><path d="M0 1.5L1.6 0L6.2 4.4L1.6 8.8L0 7.3L3.1 4.4Z"/></svg>
<div class="t" style="left:25.00px;top:778px;font-size:11.0px;color:#18bc9c;transform:scaleX(0.8854);">daniela.binnes@arcadis.com</div>
<div class="t" style="left:425.40px;top:777px;font-size:12.0px;color:#383d42;transform:scaleX(0.9558);">Your project has been validated (ZEZULA - Opel (projet complet) - NEUNKIRCHEN - AT)</div>
<div class="r" style="left:1094.00px;top:775.88px;width:141.60px;height:14.80px;background:#18bc9c;border-radius:2.5px;"></div>
<div class="t" style="left:1099.80px;top:779px;font-size:9.0px;color:#ffffff;font-weight:bold;transform:scaleX(0.9604);">Fri, 17 May 2019 14:38:30 +0200</div>
<div class="r" style="left:1599.00px;top:774.08px;width:59.80px;height:18.50px;background:#95a5a6;border-radius:3px;"></div>
<div class="t" style="left:1604.20px;top:779px;font-size:9.9px;color:#e8eded;transform:scaleX(1.0712);">Modifier</div>
<svg class="i" style="left:1646.90px;top:778.98px;width:6.20px;height:8.80px" viewBox="0 0 6.2 8.8" fill="#f4f7f7"><path d="M0 1.5L1.6 0L6.2 4.4L1.6 8.8L0 7.3L3.1 4.4Z"/></svg>
</body></html>
